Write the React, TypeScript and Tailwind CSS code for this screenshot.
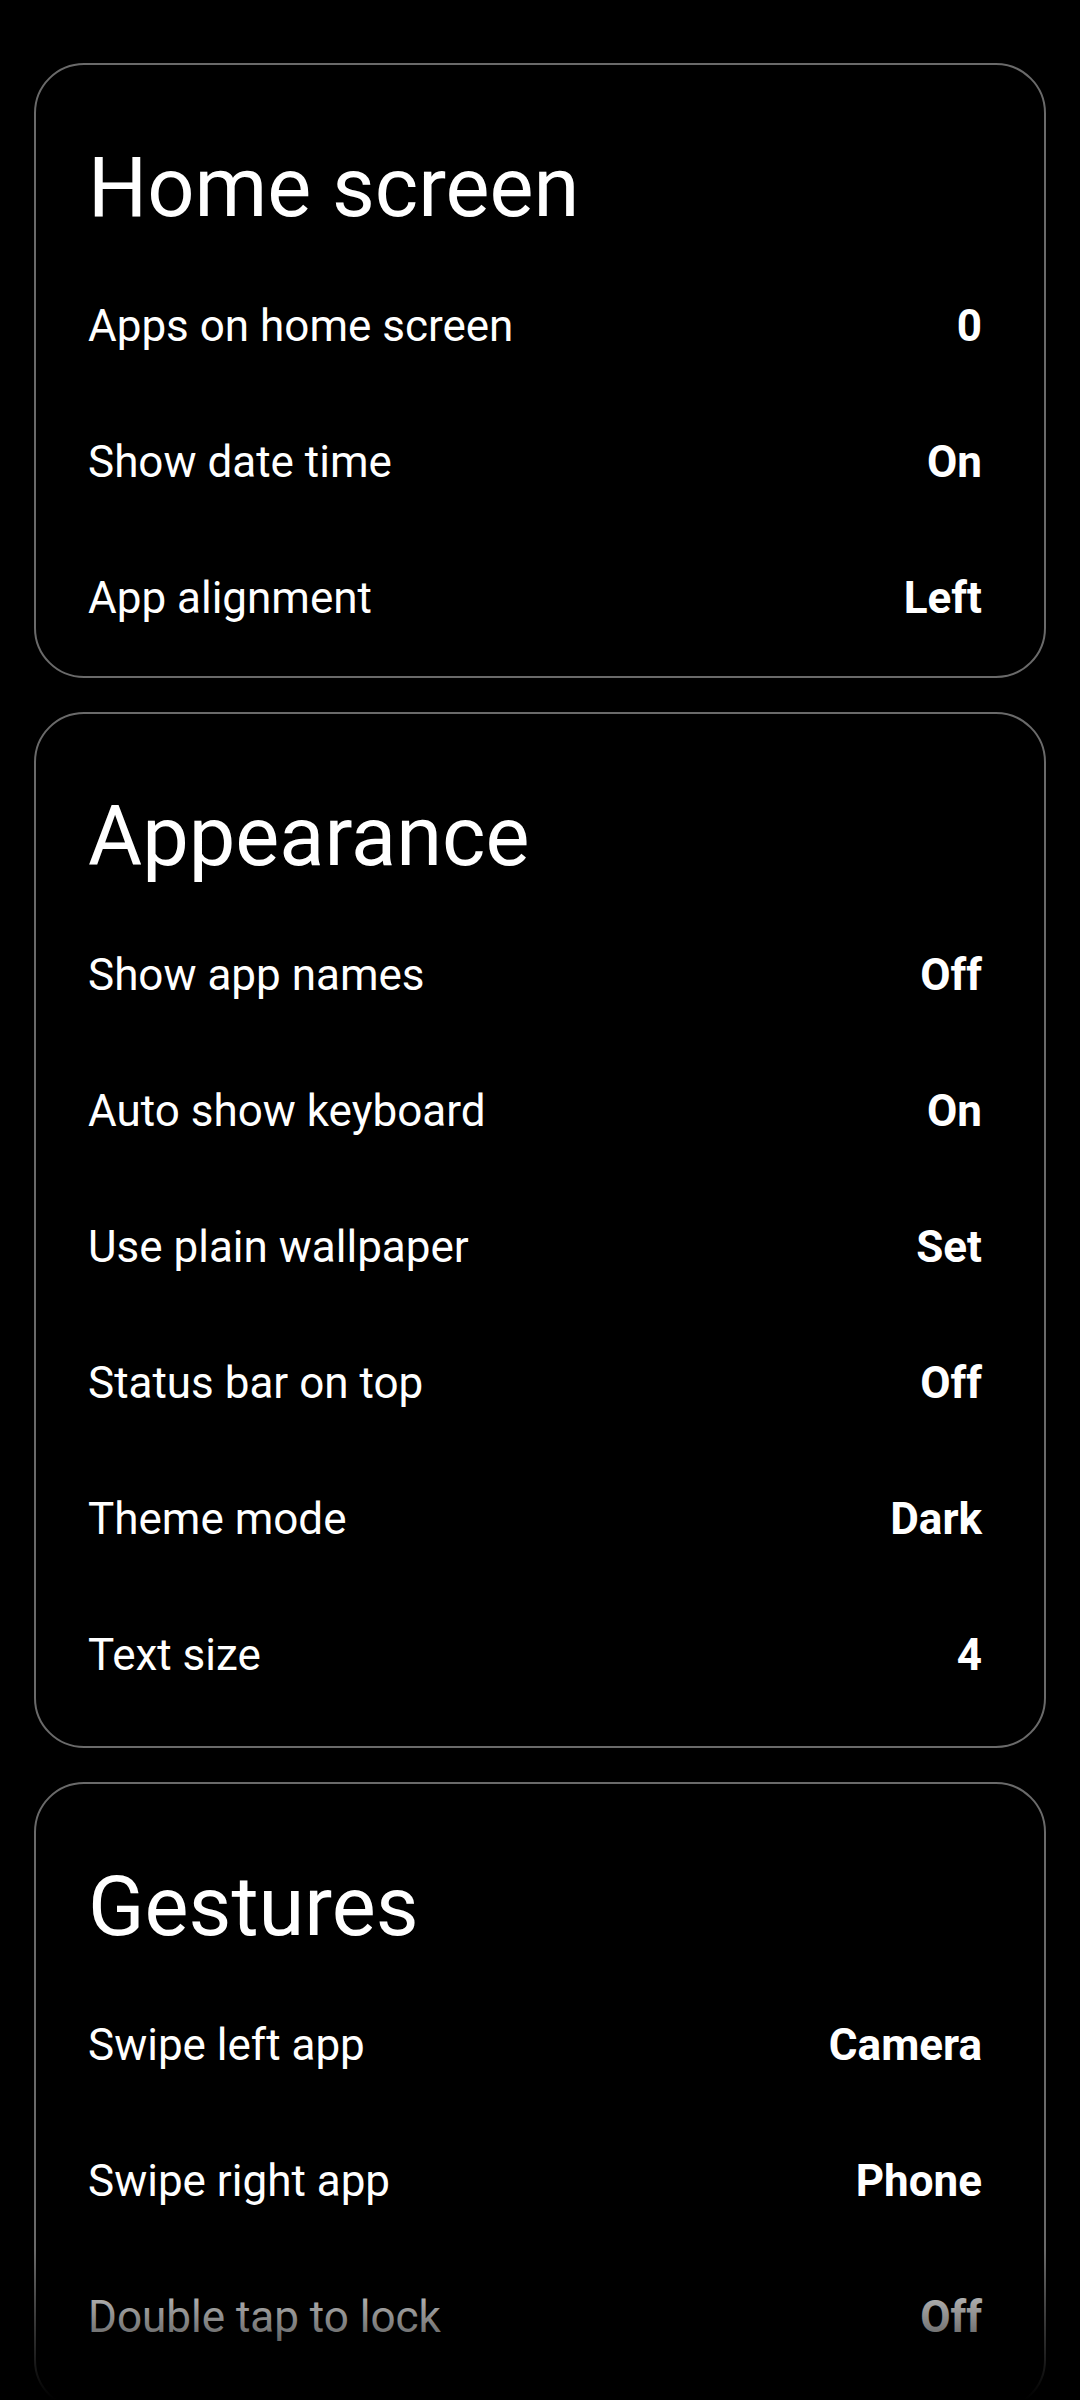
type Setting = { label: string; value: string };

type Section = {
  title: string;
  items: Setting[];
  bottom: string;
};

const sections: Section[] = [
  {
    title: "Home screen",
    bottom: "pb-[10px]",
    items: [
      { label: "Apps on home screen", value: "0" },
      { label: "Show date time", value: "On" },
      { label: "App alignment", value: "Left" },
    ],
  },
  {
    title: "Appearance",
    bottom: "pb-[23px]",
    items: [
      { label: "Show app names", value: "Off" },
      { label: "Auto show keyboard", value: "On" },
      { label: "Use plain wallpaper", value: "Set" },
      { label: "Status bar on top", value: "Off" },
      { label: "Theme mode", value: "Dark" },
      { label: "Text size", value: "4" },
    ],
  },
  {
    title: "Gestures",
    bottom: "pb-[23px]",
    items: [
      { label: "Swipe left app", value: "Camera" },
      { label: "Swipe right app", value: "Phone" },
      { label: "Double tap to lock", value: "Off" },
    ],
  },
];

function SettingRow({ item }: { item: Setting }) {
  return (
    <div className="flex h-[136px] items-center justify-between text-[44px] leading-[136px] text-white">
      <span className="font-normal">{item.label}</span>
      <span className="font-bold">{item.value}</span>
    </div>
  );
}

function SettingsCard({ section }: { section: Section }) {
  return (
    <section
      className={`shrink-0 rounded-[50px] border-2 border-[#6a6a6a] pl-[52px] pr-[62px] pt-[81px] ${section.bottom}`}
    >
      <h2 className="mb-[29px] text-[83px] font-normal leading-[83px] text-white">
        {section.title}
      </h2>
      {section.items.map((item) => (
        <SettingRow key={item.label} item={item} />
      ))}
    </section>
  );
}

export default function App() {
  return (
    <div className="relative h-[2400px] w-[1080px] overflow-hidden bg-black font-['Roboto','Liberation_Sans',sans-serif]">
      <div className="flex flex-col gap-[34px] px-[34px] pt-[63px]">
        {sections.map((s) => (
          <SettingsCard key={s.title} section={s} />
        ))}
      </div>
      {/* fading edge at the bottom of the scroll list */}
      <div className="pointer-events-none absolute inset-x-0 bottom-0 h-[150px] bg-gradient-to-b from-transparent to-black" />
    </div>
  );
}
